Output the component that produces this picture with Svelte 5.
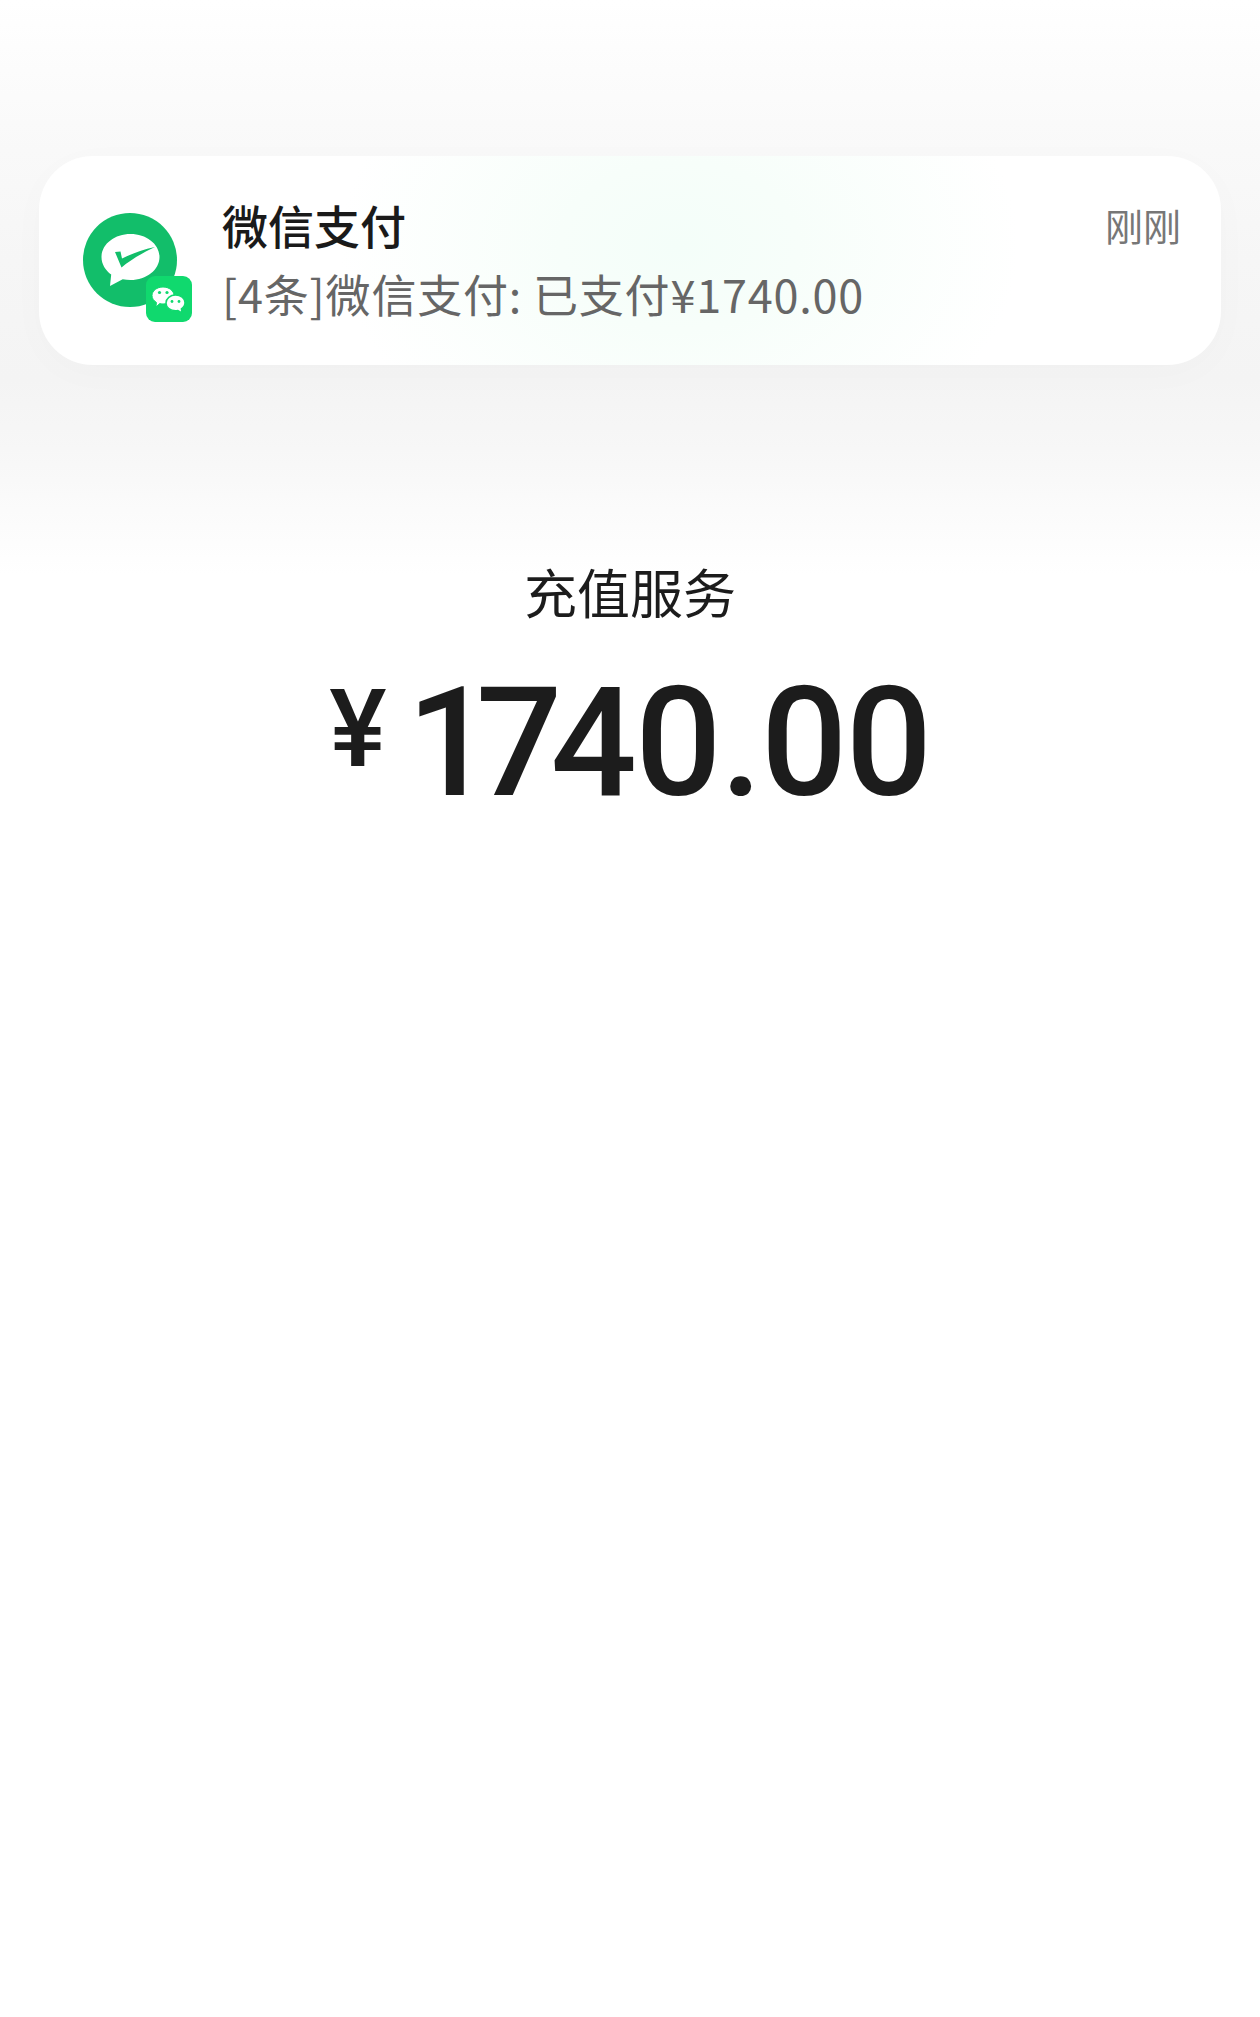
<script>
  const app = '微信支付';
  const summary = '[4条]微信支付: 已支付¥1740.00';
  const when = '刚刚';
  const service = '充值服务';
</script>

<main class="page">
  <section class="notice">
    <div class="icon">
      <svg class="pay" viewBox="0 0 94 94" aria-hidden="true">
        <circle cx="47" cy="47" r="47" fill="#12be6a" />
        <!-- speech bubble with its tail at the lower left -->
        <path d="M47.500 21c16 0 29 10.200 29 23s-13 23-29 23c-2.700 0-5.300-.3-7.800-.8L27 73l1.200-11.400C22.500 57.500 18.500 51.100 18.500 44c0-12.800 13-23 29-23z" fill="#fff" />
        <path d="M32 39l5.500-.5L39 45.500C48 41 59 36.800 72 34 59.500 40 48 46.500 38.500 54.500z" fill="#12be6a" />
      </svg>
      <svg class="chat" viewBox="0 0 46 46" aria-hidden="true">
        <rect width="46" height="46" rx="9" fill="#10d96e" />
        <path d="M17 11c6 0 11 3.800 11 8.500S23 28 17 28c-1.200 0-2.300-.1-3.300-.4L10 31l.4-4.600C7.700 24.800 6 22.300 6 19.500 6 14.800 11 11 17 11z" fill="#fff" stroke="#10d96e" stroke-width="1" />
        <path d="M29.500 19c5.300 0 9.500 3.500 9.500 7.800 0 2.500-1.400 4.700-3.600 6.100L36 37l-4.200-2.400c-.7.100-1.500.2-2.300.2-5.300 0-9.500-3.500-9.500-7.900S24.200 19 29.500 19z" fill="#fff" stroke="#10d96e" stroke-width="1.500" />
        <circle cx="13.500" cy="16.500" r="1.600" fill="#10d96e" />
        <circle cx="21" cy="16.500" r="1.600" fill="#10d96e" />
        <circle cx="26" cy="25.500" r="1.400" fill="#10d96e" />
        <circle cx="33" cy="25.500" r="1.400" fill="#10d96e" />
      </svg>
    </div>
    <div class="text">
      <h2>{app}</h2>
      <p>{summary}</p>
    </div>
    <span class="when">{when}</span>
  </section>

  <h1>{service}</h1>
  <div class="amount">
    <span class="yen">¥</span>
    <!-- the 1 and 7 sit tighter than the other figures -->
    <span class="digits"><span class="one">1</span><span class="seven">7</span>40.00</span>
  </div>
</main>

<style>
  :global(body) {
    margin: 0;
    background: #fff;
  }
  .page {
    min-height: 2017px;
    box-sizing: border-box;
    padding: 156px 39px 0;
    font-family: "Noto Sans CJK SC", "Noto Sans", sans-serif;
    color: #1c1c1c;
    overflow: hidden;
    /* soft grey haze behind the notification, top of the page only */
    background: linear-gradient(
      to bottom,
      #fff 0,
      #fcfcfc 70px,
      #f9f9f9 150px,
      #f6f6f6 260px,
      #f4f4f4 380px,
      #f7f7f7 450px,
      #fbfbfb 510px,
      #fff 575px
    );
  }
  .notice {
    display: flex;
    align-items: flex-start;
    height: 209px;
    box-sizing: border-box;
    padding: 41px 40px 0 44px;
    border-radius: 54px;
    background: radial-gradient(ellipse 340px 240px at 640px 90px, #f4fef9 0%, #f7fefa 35%, #fff 100%);
    box-shadow: 0 8px 40px rgba(0, 0, 0, 0.02);
  }
  .icon {
    position: relative;
    flex: none;
    width: 109px;
    height: 122px;
    margin-top: 16px;
  }
  .pay {
    display: block;
    width: 94px;
    height: 94px;
  }
  .chat {
    position: absolute;
    left: 63px;
    top: 63px;
    width: 46px;
    height: 46px;
  }
  .text {
    flex: 1;
    margin-left: 30px;
  }
  h2 {
    margin: 0;
    font-size: 46px;
    line-height: 54px;
    font-weight: 500;
    color: #1a1a1a;
  }
  p {
    margin: 16px 0 0;
    font-size: 45px;
    line-height: 54px;
    letter-spacing: 0.8px;
    color: #666;
    white-space: nowrap;
  }
  .when {
    flex: none;
    margin-top: 5px;
    font-size: 38px;
    line-height: 46px;
    color: #777;
  }
  h1 {
    margin: 188px 0 0;
    text-align: center;
    font-size: 53px;
    line-height: 76px;
    font-weight: 400;
  }
  .amount {
    display: flex;
    justify-content: center;
    align-items: flex-start;
    gap: 20px;
    margin-top: 38px;
    font-family: Roboto, "Liberation Sans", sans-serif;
    font-weight: 500;
  }
  .yen {
    margin-top: 8px;
    font-size: 108px;
    line-height: 108px;
  }
  .digits {
    font-size: 152px;
    line-height: 152px;
    letter-spacing: -1.5px;
  }
  .one {
    letter-spacing: -17px;
  }
  .seven {
    letter-spacing: -12px;
  }
</style>
